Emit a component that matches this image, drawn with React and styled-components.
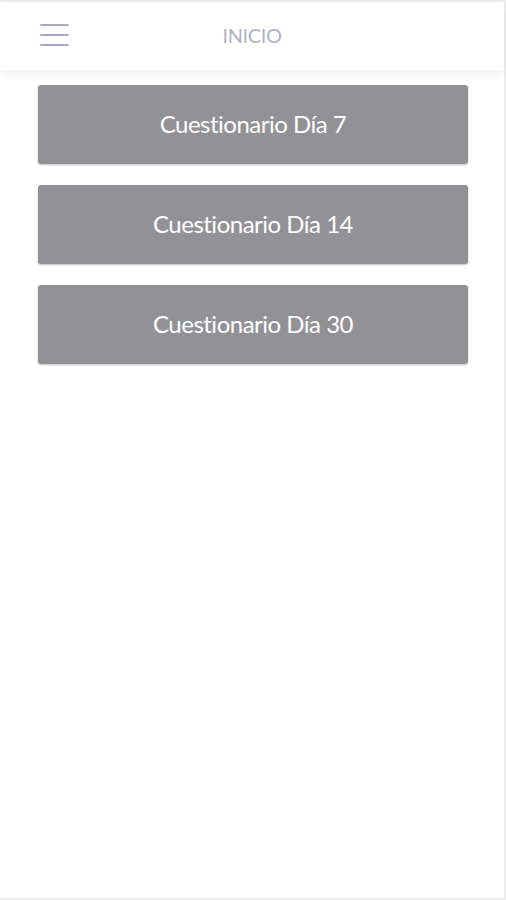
import React from "react";
import styled, { createGlobalStyle } from "styled-components";

const Global = createGlobalStyle`
  html, body { margin: 0; padding: 0; background: #ffffff; }
  body { font-family: Lato, "Open Sans", sans-serif; }
`;

const Page = styled.div`
  box-sizing: border-box;
  width: 506px;
  height: 900px;
  border-top: 2px solid #ececec;
  border-right: 2px solid #ececec;
  border-bottom: 2px solid #ececec;
  display: flex;
  flex-direction: column;
  background: #fff;
`;

const Header = styled.header`
  height: 68px;
  flex-shrink: 0;
  position: relative;
  display: flex;
  align-items: center;
  justify-content: center;
  background: #fff;
  box-shadow: 0 4px 10px rgba(0, 0, 0, 0.07);
`;

const MenuButton = styled.div`
  position: absolute;
  left: 40px;
  top: 22px;
  width: 29px;
  display: flex;
  flex-direction: column;
  gap: 8px;
`;

const MenuLine = styled.span`
  display: block;
  height: 2px;
  background: #a8a9c2;
  border-radius: 1px;
`;

const Title = styled.h1`
  margin: 0 0 2px 0;
  font-family: Lato, sans-serif;
  font-weight: 400;
  font-size: 20px;
  letter-spacing: -0.4px;
  color: #aeb1c4;
`;

const List = styled.main`
  display: flex;
  flex-direction: column;
  gap: 21px;
  padding: 15px 36px 0 38px;
`;

const QuizButton = styled.button`
  height: 79px;
  border: none;
  border-radius: 3px;
  background: #929296;
  box-shadow: 0 1px 2px rgba(0, 0, 0, 0.25);
  color: #ffffff;
  font-family: Lato, sans-serif;
  font-size: 24px;
  font-weight: 400;
  letter-spacing: -0.5px;
  padding: 0 0 2px 0;
  cursor: pointer;
`;

export default function App() {
  return (
    <>
      <Global />
      <Page>
        <Header>
          <MenuButton>
            <MenuLine />
            <MenuLine />
            <MenuLine />
          </MenuButton>
          <Title>INICIO</Title>
        </Header>
        <List>
          <QuizButton>Cuestionario Día 7</QuizButton>
          <QuizButton>Cuestionario Día 14</QuizButton>
          <QuizButton>Cuestionario Día 30</QuizButton>
        </List>
      </Page>
    </>
  );
}
